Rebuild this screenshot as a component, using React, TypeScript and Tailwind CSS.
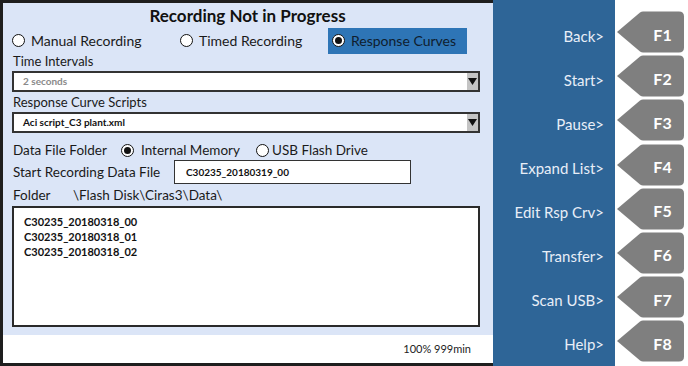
import React from "react";

const keys = [
  { label: "Back>", key: "F1" },
  { label: "Start>", key: "F2" },
  { label: "Pause>", key: "F3" },
  { label: "Expand List>", key: "F4" },
  { label: "Edit Rsp Crv>", key: "F5" },
  { label: "Transfer>", key: "F6" },
  { label: "Scan USB>", key: "F7" },
  { label: "Help>", key: "F8" },
];

const files = ["C30235_20180318_00", "C30235_20180318_01", "C30235_20180318_02"];

const Radio: React.FC<{ checked?: boolean }> = ({ checked }) => (
  <span className="inline-flex h-[13px] w-[13px] shrink-0 items-center justify-center rounded-full border-[1.5px] border-[#111] bg-white">
    {checked && <span className="h-[7px] w-[7px] rounded-full bg-[#111]" />}
  </span>
);

const Dropdown: React.FC<{ value: string; muted?: boolean }> = ({ value, muted }) => (
  <div className="flex h-[21px] items-stretch border-2 border-[#333] bg-white">
    <div
      className={
        "flex flex-1 items-center pl-[9px] text-[10px] font-bold " +
        (muted ? "text-[#8a8a8a]" : "text-[#111]")
      }
    >
      {value}
    </div>
    <div className="flex w-[11px] items-center justify-center bg-[#c4c4c4]">
      <svg width="9" height="7" viewBox="0 0 9 7">
        <path d="M0 0 L9 0 L4.5 7 Z" fill="#111" />
      </svg>
    </div>
  </div>
);

const FKey: React.FC<{ name: string }> = ({ name }) => (
  <div className="relative h-[42px] w-[70px]">
    <svg className="absolute inset-0" width="70" height="42" viewBox="0 0 70 42">
      <path
        d="M2 21 L25 1.5 Q26.5 0.5 28 0.5 L64 0.5 Q69 0.5 69 5.5 L69 36.5 Q69 41.5 64 41.5 L28 41.5 Q26.5 41.5 25 40.5 Z"
        fill="#7f7f7f"
      />
    </svg>
    <div className="relative flex h-full items-center pl-[27px] pt-[5px]">
      <span className="w-[41px] text-center text-[16px] font-bold text-white">{name}</span>
    </div>
  </div>
);

const App: React.FC = () => {
  return (
    <div
      className="flex h-[366px] w-[688px] overflow-hidden bg-white text-[#1a1a1a]"
      style={{ fontFamily: "Lato, 'Open Sans', sans-serif" }}
    >
      {/* Main panel */}
      <div className="flex w-[493px] flex-col border-y-[3px] border-l-[3px] border-[#1e1e1e]">
        <div className="flex flex-1 flex-col bg-[#dbe5f7] pl-[9px] pr-[13px]">
          <div className="flex h-[25px] items-center justify-center pl-[3px] text-[17px] font-bold text-[#111]">
            Recording Not in Progress
          </div>

          <div className="flex h-[25px] items-center text-[14px]">
            <label className="flex w-[168px] items-center gap-[6px]">
              <Radio />
              Manual Recording
            </label>
            <label className="flex w-[148px] items-center gap-[6px]">
              <Radio />
              Timed Recording
            </label>
            <label className="flex h-[26px] w-[139px] items-center gap-[6px] bg-[#2e75b6] pl-[4px] text-[#0f1d2e]">
              <Radio checked />
              Response Curves
            </label>
          </div>

          <div className="flex h-[18px] items-end pl-[1px] text-[13px]">Time Intervals</div>
          <Dropdown value="2 seconds" muted />

          <div className="flex h-[20px] items-end pl-[1px] text-[13px]">Response Curve Scripts</div>
          <Dropdown value="Aci script_C3 plant.xml" />

          <div className="mt-[7px] flex h-[20px] items-center pl-[1px] text-[13.5px]">
            <span className="w-[108px]">Data File Folder</span>
            <Radio checked />
            <span className="ml-[7px] w-[115px]">Internal Memory</span>
            <Radio />
            <span className="ml-[3px]">USB Flash Drive</span>
          </div>

          <div className="flex h-[24px] items-center pl-[1px] text-[13.5px]">
            <span className="w-[161px]">Start Recording Data File</span>
            <div className="flex h-[24px] w-[237px] items-center border-[1.5px] border-[#333] bg-white pl-[11px] text-[10px] font-bold text-[#111]">
              C30235_20180319_00
            </div>
          </div>

          <div className="flex h-[22px] items-center pl-[1px] text-[13.5px]">
            <span className="w-[60px]">Folder</span>
            <span>\Flash Disk\Ciras3\Data\</span>
          </div>

          <div className="h-[121px] border-2 border-[#2a2a2a] bg-white pl-[10px] pt-[6px] text-[11px] font-bold leading-[15px] text-[#111]">
            {files.map((f) => (
              <div key={f}>{f}</div>
            ))}
          </div>
        </div>
        <div className="flex h-[28px] items-center justify-end bg-white pr-[22px] text-[11px] text-[#222]">
          100% 999min
        </div>
      </div>

      {/* Soft key labels */}
      <div className="flex w-[122px] flex-col bg-[#2e6597] pr-[11px] pt-[14px]">
        {keys.map((k) => (
          <div
            key={k.key}
            className="flex h-[44px] items-center justify-end text-[15px] text-[#e8eef7]"
          >
            {k.label}
          </div>
        ))}
      </div>

      {/* Function keys */}
      <div className="flex w-[73px] flex-col pt-[11px]">
        {keys.map((k) => (
          <div key={k.key} className="flex h-[44.2px] items-start">
            <FKey name={k.key} />
          </div>
        ))}
      </div>
    </div>
  );
};

export default App;
